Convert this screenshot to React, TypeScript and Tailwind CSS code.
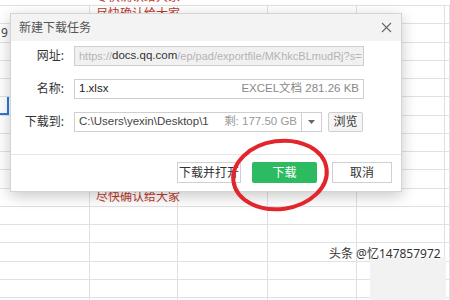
import React from "react";

const COLS = [90, 88, 90, 89, 88, 5];
const ROWS = Array.from({ length: 17 });

function Sheet() {
  return (
    <div className="absolute inset-0 flex flex-col pt-[5px]">
      {ROWS.map((_, r) => (
        <div key={r} className="flex h-[18.25px] shrink-0 border-t border-[#e1e1e1]">
          {COLS.map((w, c) => (
            <div key={c} style={{ width: w }} className="shrink-0 border-r border-[#e1e1e1]" />
          ))}
        </div>
      ))}
    </div>
  );
}

export default function App() {
  const font = { fontFamily: '"Noto Sans", "Noto Sans CJK SC", sans-serif' };
  const latin = { fontFamily: '"Liberation Sans", "Noto Sans CJK SC", sans-serif' };
  return (
    <div className="relative h-[300px] w-[450px] overflow-hidden bg-white" style={font}>
      <Sheet />

      {/* cell text behind the dialog */}
      <div className="absolute left-[96px] top-[-9px] text-[12px] leading-none text-[#c0392b]">尽快确认给大家</div>
      <div className="absolute left-[96px] top-[8px] text-[12px] leading-none text-[#c0392b]">尽快确认给大家</div>
      <div className="absolute left-[96px] top-[191px] text-[12px] leading-none text-[#c0392b]">尽快确认给大家</div>
      <div className="absolute left-[1px] top-[27px] text-[12px] leading-none text-[#444]">9</div>
      <div className="absolute left-0 top-[97px] h-[18px] w-[9px] border-b-2 border-r-2 border-[#2b7bd6]" />

      {/* dialog */}
      <div className="absolute left-[10px] top-[13px] flex h-[179px] w-[392px] flex-col border border-[#d4d4d4] bg-white shadow-[0_4px_14px_rgba(0,0,0,0.22)]">
        <div className="flex h-[27px] shrink-0 items-center justify-between bg-[#f3f3f3] pl-[8px] pr-[9px]">
          <span className="text-[12px] text-[#555]">新建下载任务</span>
          <svg width="11" height="11" viewBox="0 0 11 11" className="text-[#666]">
            <path d="M1 1L10 10M10 1L1 10" stroke="currentColor" strokeWidth="1.1" fill="none" />
          </svg>
        </div>

        <div className="flex flex-col gap-[13px] pt-[5px] text-[12px]">
          <div className="flex items-center">
            <span className="w-[53px] text-right text-[#333]">网址:</span>
            <div
              className="ml-[10px] flex h-[20px] w-[290px] items-center overflow-hidden whitespace-nowrap border border-[#cfcfcf] bg-[#f1f1f1] px-[4px] text-[11px] text-[#b4b4b4]"
              style={latin}
            >
              https://<span className="text-[11.5px] text-[#333]">docs.qq.com</span>/ep/pad/exportfile/MKhkcBLmudRj?s=
            </div>
          </div>
          <div className="flex items-center">
            <span className="w-[53px] text-right text-[#333]">名称:</span>
            <div
              className="ml-[10px] flex h-[20px] w-[290px] items-center justify-between border border-[#cfcfcf] bg-white px-[4px] text-[11.5px]"
              style={latin}
            >
              <span className="text-[#222]">1.xlsx</span>
              <span className="text-[#888]">EXCEL文档 281.26 KB</span>
            </div>
          </div>
          <div className="flex items-center">
            <span className="w-[53px] text-right text-[#333]">下载到:</span>
            <div
              className="ml-[10px] flex h-[20px] w-[228px] items-center justify-between border border-[#cfcfcf] bg-white px-[4px] text-[11.5px]"
              style={latin}
            >
              <span className="text-[#444]">C:\Users\yexin\Desktop\1</span>
              <span className="text-[#999]">剩: 177.50 GB</span>
            </div>
            <div className="flex h-[20px] w-[20px] items-center justify-center border border-l-0 border-[#cfcfcf] bg-white">
              <svg width="7" height="4" viewBox="0 0 7 4"><path d="M0 0H7L3.5 4Z" fill="#666" /></svg>
            </div>
            <div className="ml-[6px] flex h-[20px] w-[35px] items-center justify-center rounded-[2px] border border-[#cfcfcf] bg-[#f5f5f5] text-[#333]">
              浏览
            </div>
          </div>
        </div>

        <div className="mt-auto flex h-[37px] shrink-0 items-start gap-[11px] border-t border-[#e6e6e6] pl-[166px] pt-[7px] text-[12px]">
          <div className="flex h-[21px] w-[64px] items-center justify-center whitespace-nowrap border border-[#d0d0d0] bg-white text-[#333]">
            下载并打开
          </div>
          <div className="flex h-[21px] w-[65px] items-center justify-center rounded-[2px] bg-[#2dbb62] text-white">
            下载
          </div>
          <div className="ml-[4px] flex h-[21px] w-[60px] items-center justify-center border border-[#d0d0d0] bg-white text-[#333]">
            取消
          </div>
        </div>
      </div>

      {/* red hand-drawn circle */}
      <svg className="absolute left-0 top-0" width="450" height="300" viewBox="0 0 450 300">
        <ellipse cx="280" cy="175" rx="47" ry="34" fill="none" stroke="#e3262b" strokeWidth="4" transform="rotate(-8 280 175)" />
      </svg>

      {/* watermark */}
      <div className="absolute left-[370px] top-[257px] h-[43px] w-[76px] bg-[#f2f2f2]" />
      <div
        className="absolute left-[329px] top-[245px] whitespace-nowrap text-[12px] text-[#333]"
        style={{ textShadow: "0 0 2px #fff, 0 0 2px #fff" }}
      >
        头条 @忆147857972
      </div>
    </div>
  );
}
